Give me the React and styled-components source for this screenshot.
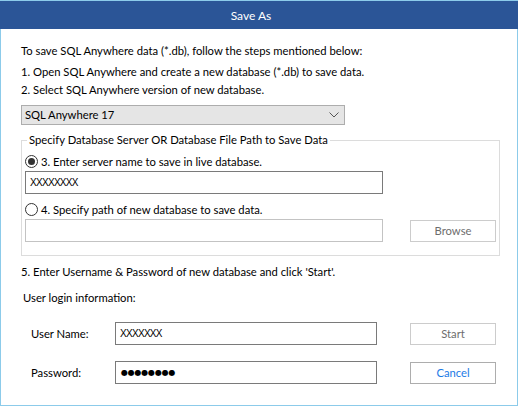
import React from "react";
import styled, { createGlobalStyle } from "styled-components";

const GlobalStyle = createGlobalStyle`
  html, body {
    margin: 0;
    padding: 0;
    background: #ffffff;
  }
  * {
    box-sizing: border-box;
  }
`;

const uiFont = `Lato, "Open Sans", sans-serif`;

function App() {
  return (
    <>
      <GlobalStyle />
      <Window>
        <TitleBar>Save As</TitleBar>
        <Body>
          <Para top={14}>
            To save SQL Anywhere data (*.db), follow the steps mentioned below:
          </Para>
          <Para top={5}>
            1. Open SQL Anywhere and create a new database (*.db) to save data.
          </Para>
          <Para top={2}>2. Select SQL Anywhere version of new database.</Para>

          <Select>
            <span>SQL Anywhere 17</span>
            <svg width="10" height="6" viewBox="0 0 10 6">
              <polyline
                points="0.5,0.5 5,5 9.5,0.5"
                fill="none"
                stroke="#555"
                strokeWidth="1"
              />
            </svg>
          </Select>

          <GroupBox>
            <Legend>
              Specify Database Server OR Database File Path to Save Data
            </Legend>
            <RadioRow top={5}>
              <Radio checked />
              <span>3. Enter server name to save in live database.</span>
            </RadioRow>
            <FieldRow top={2}>
              <Field width={358}>XXXXXXXX</Field>
            </FieldRow>
            <RadioRow top={7}>
              <Radio />
              <span>4. Specify path of new database to save data.</span>
            </RadioRow>
            <FieldRow top={2} spread>
              <Field width={358} muted />
              <Button>Browse</Button>
            </FieldRow>
          </GroupBox>

          <Para top={8}>
            5. Enter Username &amp; Password of new database and click 'Start'.
          </Para>
          <Para top={10} indent={2}>
            User login information:
          </Para>

          <LoginRow top={16}>
            <Label>User Name:</Label>
            <Field width={262}>XXXXXXX</Field>
            <Button>Start</Button>
          </LoginRow>
          <LoginRow top={16}>
            <Label>Password:</Label>
            <Field width={262}>
              <Dots>●●●●●●●●</Dots>
            </Field>
            <Button primary>Cancel</Button>
          </LoginRow>
        </Body>
      </Window>
    </>
  );
}

export default App;

const Window = styled.div`
  width: 518px;
  height: 406px;
  border: 1px solid #8ccbea;
  background: #ffffff;
  font-family: ${uiFont};
  font-size: 11.25px;
  color: #000;
  display: flex;
  flex-direction: column;
`;

const TitleBar = styled.div`
  height: 28px;
  margin: 0 -1px;
  background: #2b5597;
  color: #ffffff;
  font-size: 12px;
  display: flex;
  align-items: center;
  justify-content: center;
  padding-right: 16px;
`;

const Body = styled.div`
  padding-left: 20px;
  display: flex;
  flex-direction: column;
  align-items: flex-start;
`;

const Para = styled.div`
  margin-top: ${(p) => p.top || 0}px;
  padding-left: ${(p) => p.indent || 0}px;
  line-height: 16px;
  white-space: nowrap;
`;

const Select = styled.div`
  margin-top: 7px;
  width: 324px;
  height: 20px;
  background: #e5e5e5;
  border: 1px solid #adadad;
  display: flex;
  align-items: center;
  justify-content: space-between;
  padding: 0 5px 0 3px;
  line-height: 16px;
`;

const GroupBox = styled.fieldset`
  margin: 7px 0 0 0;
  width: 479px;
  min-width: 0;
  border: 1px solid #dcdcdc;
  padding: 0 3px 13px 3px;
  display: flex;
  flex-direction: column;
`;

const Legend = styled.legend`
  margin-left: 2px;
  padding: 0 2px;
  line-height: 16px;
  white-space: nowrap;
`;

const RadioRow = styled.div`
  margin-top: ${(p) => p.top || 0}px;
  height: 16px;
  display: flex;
  align-items: center;
  gap: 3px;
  white-space: nowrap;
`;

const Radio = styled.span`
  width: 13px;
  height: 13px;
  border-radius: 50%;
  border: 1px solid #333333;
  background: #ffffff;
  display: flex;
  align-items: center;
  justify-content: center;
  &::after {
    content: "";
    width: 7px;
    height: 7px;
    border-radius: 50%;
    background: ${(p) => (p.checked ? "#333333" : "transparent")};
  }
`;

const FieldRow = styled.div`
  margin-top: ${(p) => p.top || 0}px;
  display: flex;
  align-items: center;
  justify-content: ${(p) => (p.spread ? "space-between" : "flex-start")};
`;

const Field = styled.div`
  width: ${(p) => p.width}px;
  height: 23px;
  border: 1px solid ${(p) => (p.muted ? "#c3c3c3" : "#7a7a7a")};
  background: #ffffff;
  display: flex;
  align-items: center;
  padding-left: 4px;
  font-family: "Liberation Sans", Arial, sans-serif;
  font-size: 10px;
  letter-spacing: -0.7px;
`;

const Dots = styled.span`
  font-family: "DejaVu Sans", sans-serif;
  font-size: 8px;
  letter-spacing: -0.2px;
  padding-left: 1px;
`;

const Button = styled.div`
  width: 86px;
  height: 22px;
  border: 1px solid ${(p) => (p.primary ? "#adadad" : "#cccccc")};
  background: #ffffff;
  color: ${(p) => (p.primary ? "#1a7ae6" : "#6d6d6d")};
  display: flex;
  align-items: center;
  justify-content: center;
`;

const LoginRow = styled.div`
  margin-top: ${(p) => p.top || 0}px;
  display: flex;
  align-items: center;
  & > ${Button} {
    margin-left: 33px;
  }
`;

const Label = styled.div`
  width: 94px;
  padding-left: 10px;
  white-space: nowrap;
`;
